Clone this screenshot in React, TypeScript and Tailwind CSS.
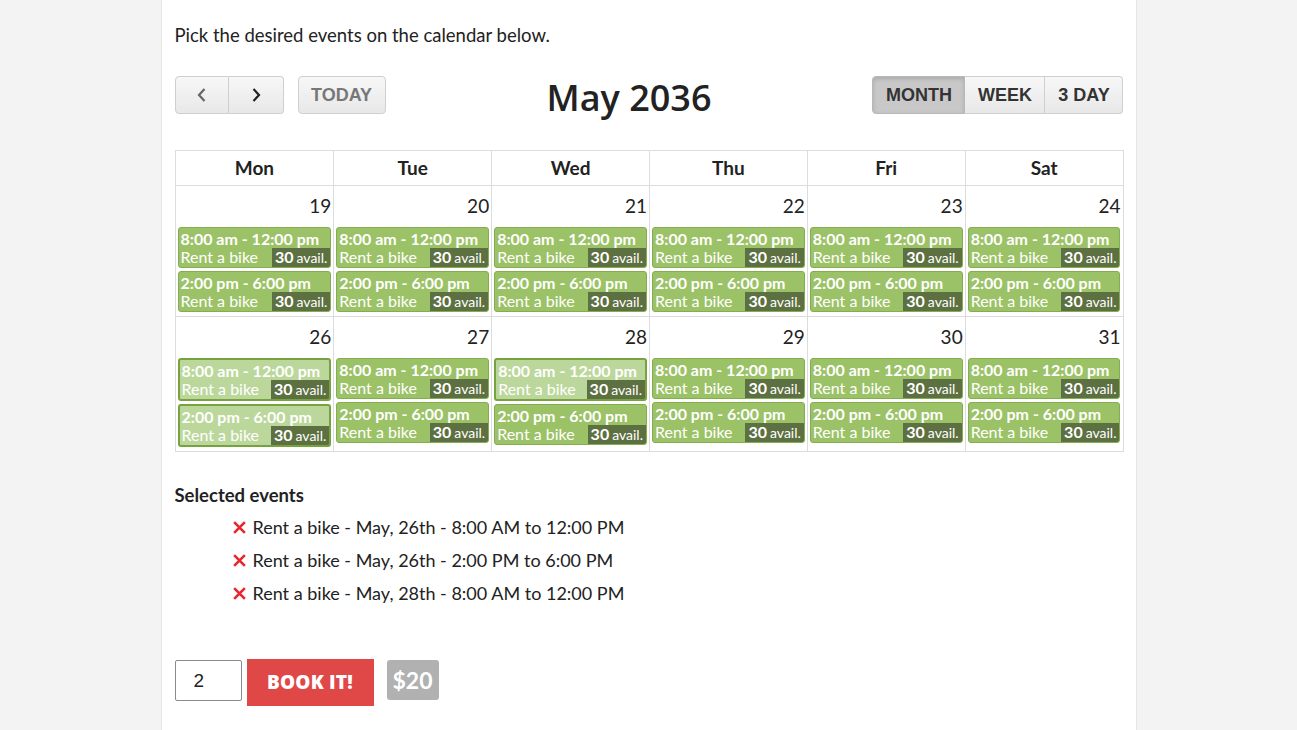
import React from 'react';

type Ev = { time: string; selected?: boolean };

const weeks: { day: number; events: Ev[] }[][] = [
  [19, 20, 21, 22, 23, 24].map((d) => ({
    day: d,
    events: [{ time: '8:00 am - 12:00 pm' }, { time: '2:00 pm - 6:00 pm' }],
  })),
  [26, 27, 28, 29, 30, 31].map((d) => ({
    day: d,
    events: [
      { time: '8:00 am - 12:00 pm', selected: d === 26 || d === 28 },
      { time: '2:00 pm - 6:00 pm', selected: d === 26 },
    ],
  })),
];

const days = ['Mon', 'Tue', 'Wed', 'Thu', 'Fri', 'Sat'];

const selectedList = [
  'Rent a bike - May, 26th - 8:00 AM to 12:00 PM',
  'Rent a bike - May, 26th - 2:00 PM to 6:00 PM',
  'Rent a bike - May, 28th - 8:00 AM to 12:00 PM',
];

const EventBox: React.FC<{ ev: Ev }> = ({ ev }) => (
  <div
    className={
      'mx-[2px] rounded-[3px] overflow-hidden text-white leading-none ' +
      (ev.selected ? 'border-2 border-[#77a33e] bg-[#bcd79b]' : 'border border-[#84ad4f] bg-[#9cc267]')
    }
  >
    <div className="pl-[2px] pt-[3px] text-[16px] font-bold h-[20px] whitespace-nowrap">{ev.time}</div>
    <div className="flex items-end justify-between h-[19px]">
      <span className="pl-[2px] pb-[2px] text-[16px] whitespace-nowrap">Rent a bike</span>
      <span className="bg-[#5d7041] h-[19px] px-[3px] flex items-end pb-[2px] whitespace-nowrap">
        <span className="text-[16px] font-bold">30</span>
        <span className="text-[14px] ml-[3px]">avail.</span>
      </span>
    </div>
  </div>
);

const NavBtn: React.FC<{ children: React.ReactNode; className?: string; active?: boolean }> = ({
  children,
  className,
  active,
}) => (
  <button
    className={
      'h-[38px] flex items-center justify-center border text-[18px] font-bold ' +
      (active
        ? 'bg-[#c8c8c8] border-[#b8b8b8] shadow-[inset_0_2px_4px_rgba(0,0,0,0.15)] '
        : 'bg-gradient-to-b from-[#f7f7f7] to-[#e8e8e8] border-[#cfcfcf] ') +
      (className || '')
    }
    style={{ fontFamily: '"Liberation Sans", Arial, sans-serif' }}
  >
    {children}
  </button>
);

const App: React.FC = () => {
  return (
    <div className="min-h-[730px] bg-[#f3f3f3] flex justify-center" style={{ fontFamily: 'Lato, "Open Sans", sans-serif' }}>
      <div className="w-[976px] bg-white border-x border-[#e6e6e6] px-[13px] pt-[24px] pb-[24px] text-[#222]">
        <p className="text-[18.5px] leading-[22px]">Pick the desired events on the calendar below.</p>

        {/* toolbar */}
        <div className="mt-[19px] flex items-center justify-between w-[949px]">
          <div className="flex items-center gap-[14px]">
            <div className="flex">
              <NavBtn className="w-[54px] rounded-l-[4px]">
                <svg width="14" height="18" viewBox="0 0 14 18" fill="none" stroke="#666" strokeWidth="2.2">
                  <path d="M9.5 3 4 9l5.5 6" />
                </svg>
              </NavBtn>
              <NavBtn className="w-[55px] rounded-r-[4px] border-l-0">
                <svg width="14" height="18" viewBox="0 0 14 18" fill="none" stroke="#222" strokeWidth="2.2">
                  <path d="M4.5 3 10 9l-5.5 6" />
                </svg>
              </NavBtn>
            </div>
            <NavBtn className="w-[88px] rounded-[4px] text-[#777] text-[17.5px]">TODAY</NavBtn>
          </div>
          <h2 className="text-[36px] font-semibold text-[#222] mt-[6px]" style={{ fontFamily: '"Open Sans", sans-serif' }}>
            May 2036
          </h2>
          <div className="flex justify-end">
            <NavBtn active className="w-[93px] rounded-l-[4px] text-[#333]">MONTH</NavBtn>
            <NavBtn className="w-[80px] border-l-0 text-[#333]">WEEK</NavBtn>
            <NavBtn className="w-[78px] rounded-r-[4px] border-l-0 text-[#333]">3 DAY</NavBtn>
          </div>
        </div>

        {/* calendar */}
        <div className="mt-[25px] w-[949px] border border-[#dcdcdc]">
          <div className="grid grid-cols-6">
            {days.map((d, i) => (
              <div
                key={d}
                className={'h-[34px] flex items-center justify-center text-[19px] font-bold text-[#222] ' + (i > 0 ? 'border-l border-[#dcdcdc]' : '')}
              >
                {d}
              </div>
            ))}
          </div>
          {weeks.map((w, wi) => (
            <div key={wi} className="grid grid-cols-6 border-t border-[#dcdcdc]">
              {w.map((c, i) => (
                <div key={c.day} className={'pb-[4px] ' + (i > 0 ? 'border-l border-[#dcdcdc]' : '')}>
                  <div className="text-right pr-[2px] text-[19px] h-[41px] pt-[9px] leading-[22px] text-[#222]">{c.day}</div>
                  <div className="flex flex-col gap-[3px]">
                    {c.events.map((ev, k) => (
                      <EventBox key={k} ev={ev} />
                    ))}
                  </div>
                </div>
              ))}
            </div>
          ))}
        </div>

        {/* selected */}
        <div className="mt-[32px] text-[18.5px] font-bold text-[#222] leading-[22px]">Selected events</div>
        <ul className="mt-[10px] pl-[57px] flex flex-col gap-[11px]">
          {selectedList.map((s) => (
            <li key={s} className="flex items-center text-[18px] leading-[22px] text-[#222]">
              <svg width="15" height="15" viewBox="0 0 14 14" className="mr-[6px]" stroke="#e8262b" strokeWidth="2.4">
                <path d="M2 2l10 10M12 2 2 12" />
              </svg>
              {s}
            </li>
          ))}
        </ul>

        {/* booking */}
        <div className="mt-[55px] flex items-start">
          <input
            defaultValue="2"
            className="mt-[1px] w-[67px] h-[41px] border border-[#8a8a8a] rounded-[2px] px-[18px] text-[19px] text-[#222] outline-none"
            style={{ fontFamily: '"Liberation Sans", Arial, sans-serif' }}
          />
          <button
            className="ml-[5px] w-[127px] h-[47px] bg-[#e04747] text-white text-[19px] font-extrabold tracking-[0.2px]"
            style={{ fontFamily: '"Open Sans", sans-serif' }}
          >
            BOOK IT!
          </button>
          <div className="ml-[13px] mt-[1px] h-[40px] w-[52px] rounded-[3px] bg-[#b1b1b1] text-white text-[23px] font-bold flex items-center justify-center">
            $20
          </div>
        </div>
      </div>
    </div>
  );
};

export default App;
